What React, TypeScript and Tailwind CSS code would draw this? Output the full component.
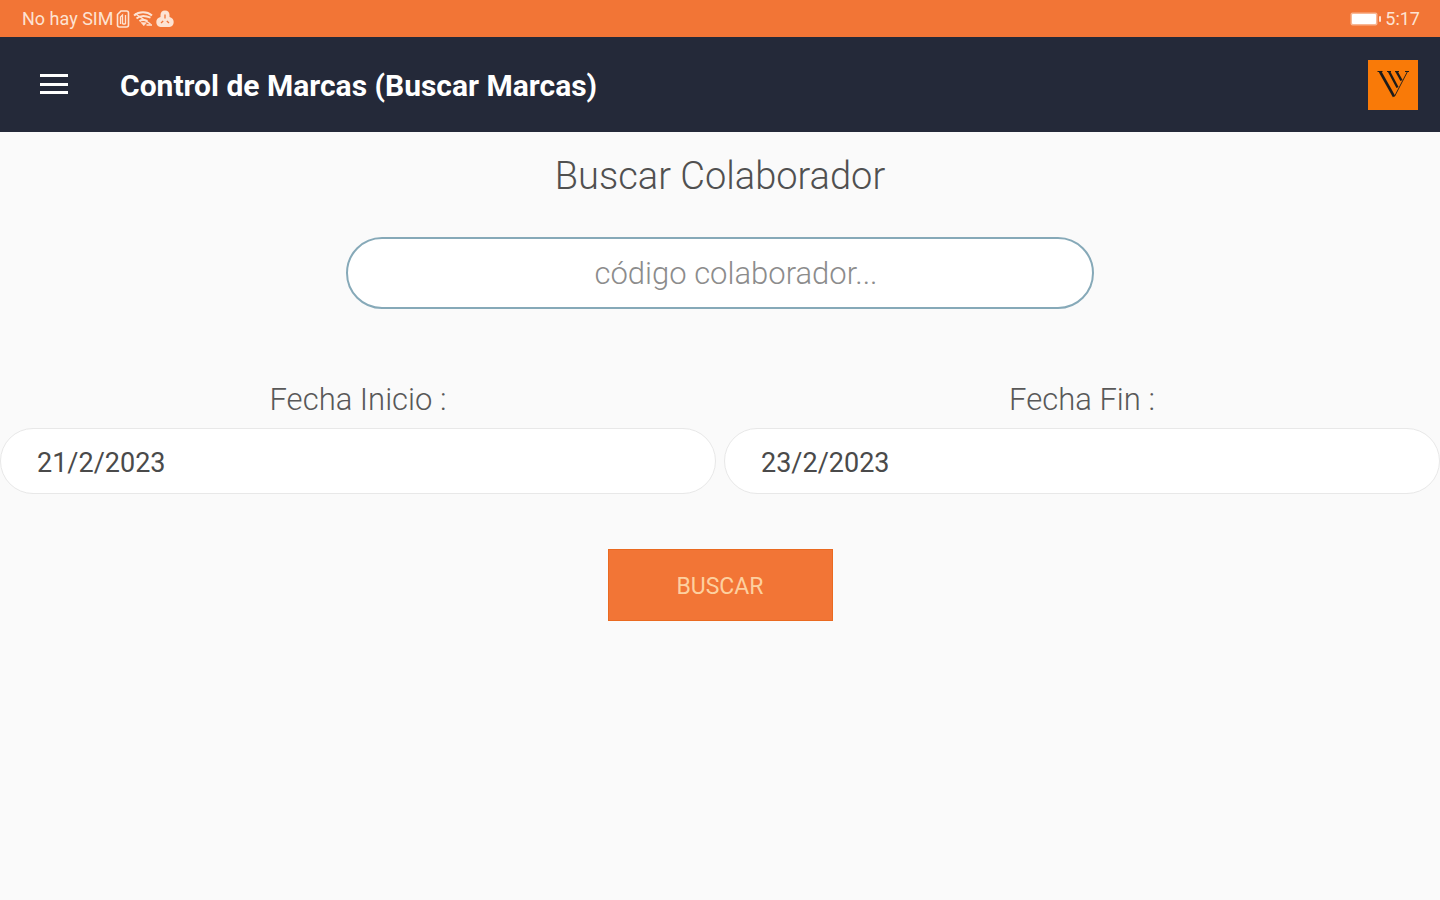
import { useState } from 'react';

function SimIcon() {
  return (
    <svg viewBox="0 0 14 18" className="h-[18px] w-[14px]" fill="none" stroke="currentColor" strokeWidth="1.6" aria-hidden="true">
      <path d="M1.5 4.5 5 1h5.5a2 2 0 0 1 2 2v12a2 2 0 0 1-2 2h-7a2 2 0 0 1-2-2z" />
      <path d="M4.5 14V7l2-2v9M9.5 5v9M6.5 14h3" strokeWidth="1.3" />
    </svg>
  );
}

function WifiIcon() {
  return (
    <svg viewBox="0 0 20 16" className="h-4 w-5" fill="none" stroke="currentColor" aria-hidden="true">
      <path d="M1 4.5C6 .2 14 .2 19 4.5" strokeWidth="2" />
      <path d="M3.5 7.5c3.5-3 8-3.3 14-.8" strokeWidth="2" />
      <path d="M6.5 10.2c2-1.7 4-1.9 8-.2" strokeWidth="2" />
      <path d="m8 11.5 2.8 3.2 2.6-3z" fill="currentColor" strokeWidth="0.6" />
      <path d="M2 2.5 17.5 13M13.5 14H19" strokeWidth="1.5" />
    </svg>
  );
}

function AlertIcon() {
  return (
    <svg viewBox="0 0 18 18" className="size-[18px]" aria-hidden="true">
      <path
        d="M9 .5c3 0 4.5 2 4.5 4.5v2c2.600.8 4.200 2.500 4.200 5.100 0 3-1.700 4.900-4.200 4.900h-9C2 17 .3 15.100.3 12.100c0-2.600 1.600-4.300 4.200-5.100V5C4.500 2.500 6 .5 9 .5z"
        fill="currentColor"
      />
      <path d="M9 4.5v4M5 13l2.2-2M13 13l-2.2-2" fill="none" stroke="#f27536" strokeWidth="1.3" />
    </svg>
  );
}

function BatteryIcon() {
  return (
    <svg viewBox="0 0 31 14" className="h-[14px] w-[31px]" fill="currentColor" aria-hidden="true">
      <rect x="0.5" y="0.5" width="27" height="13" rx="2" opacity="0.6" />
      <rect x="2" y="2" width="24" height="10" rx="1" fill="#fff" />
      <rect x="29" y="4" width="2" height="6" rx="1" />
    </svg>
  );
}

function Logo() {
  return (
    <svg viewBox="0 0 50 50" className="size-[50px]" role="img" aria-label="Logo">
      <rect width="50" height="50" fill="#f97a08" />
      <g fill="none" stroke="#1c1b1a">
        <path d="M9.5 11.5h5M19 11.500h4M27 11.500h4M37 11.500h4" strokeWidth="1.2" />
        <path d="m12 11.500 14 25" strokeWidth="2.6" />
        <path d="m21 11.500 8.500 16" strokeWidth="2.4" />
        <path d="m28.500 11.500 5 9" strokeWidth="2.4" />
        <path d="m39.500 11.500-13 25" strokeWidth="0.9" />
      </g>
    </svg>
  );
}

interface DateFieldProps {
  id: string;
  label: string;
  value: string;
  onChange: (value: string) => void;
}

function DateField({ id, label, value, onChange }: DateFieldProps) {
  return (
    <div className="flex flex-col gap-2">
      <label htmlFor={id} className="text-center text-[31px] leading-10 font-light text-[#585858]">
        {label}
      </label>
      <input
        id={id}
        type="text"
        value={value}
        onChange={(e) => onChange(e.target.value)}
        className="h-[66px] w-full rounded-full border border-[#e8e8e8] bg-white px-9 pt-1 text-[27px] text-[#4a4a4a] outline-none"
      />
    </div>
  );
}

export default function App() {
  const [code, setCode] = useState('');
  const [startDate, setStartDate] = useState('21/2/2023');
  const [endDate, setEndDate] = useState('23/2/2023');

  return (
    <div className="min-h-screen bg-[#fafafa] font-[Roboto,sans-serif]">
      {/* Status bar */}
      <div className="flex h-[37px] items-center justify-between bg-[#f27536] pr-5 pl-[22px] text-lg text-[#fde3d3]">
        <div className="flex items-center gap-[3px]">
          <span>No hay SIM</span>
          <SimIcon />
          <WifiIcon />
          <AlertIcon />
        </div>
        <div className="flex items-center gap-1">
          <BatteryIcon />
          <span>5:17</span>
        </div>
      </div>

      {/* App bar */}
      <header className="flex h-[95px] items-center bg-[#242939] pr-[22px] pl-10 text-white">
        <button type="button" aria-label="Menú" className="mr-[52px]">
          <svg viewBox="0 0 28 24" className="h-6 w-7" fill="currentColor" aria-hidden="true">
            <path d="M0 1h28v3H0zM0 10h28v3H0zM0 18h28v3H0z" />
          </svg>
        </button>
        <h1 className="flex-1 pt-[2px] text-[30px] leading-10 font-bold">Control de Marcas (Buscar Marcas)</h1>
        <Logo />
      </header>

      <form className="flex flex-col items-center pt-5" onSubmit={(e) => e.preventDefault()}>
        <label htmlFor="code" className="text-[38px] leading-12 font-light text-[#505050]">
          Buscar Colaborador
        </label>
        <input
          id="code"
          type="text"
          value={code}
          onChange={(e) => setCode(e.target.value)}
          placeholder="código colaborador..."
          className="mt-[37px] h-[72px] w-[52%] rounded-full border-2 border-[#86a9b8] bg-white pl-8 text-center text-[31px] font-light text-[#444] outline-none placeholder:text-[#8c8c8c]"
        />

        <div className="mt-[71px] grid w-full grid-cols-2 gap-2">
          <DateField id="start-date" label="Fecha Inicio :" value={startDate} onChange={setStartDate} />
          <DateField id="end-date" label="Fecha Fin :" value={endDate} onChange={setEndDate} />
        </div>

        <button
          type="submit"
          className="mt-[55px] h-[72px] w-[225px] border border-[#ea6a20] bg-[#f27536] pt-1 text-[23px] text-[#fdd0a0]"
        >
          BUSCAR
        </button>
      </form>
    </div>
  );
}
